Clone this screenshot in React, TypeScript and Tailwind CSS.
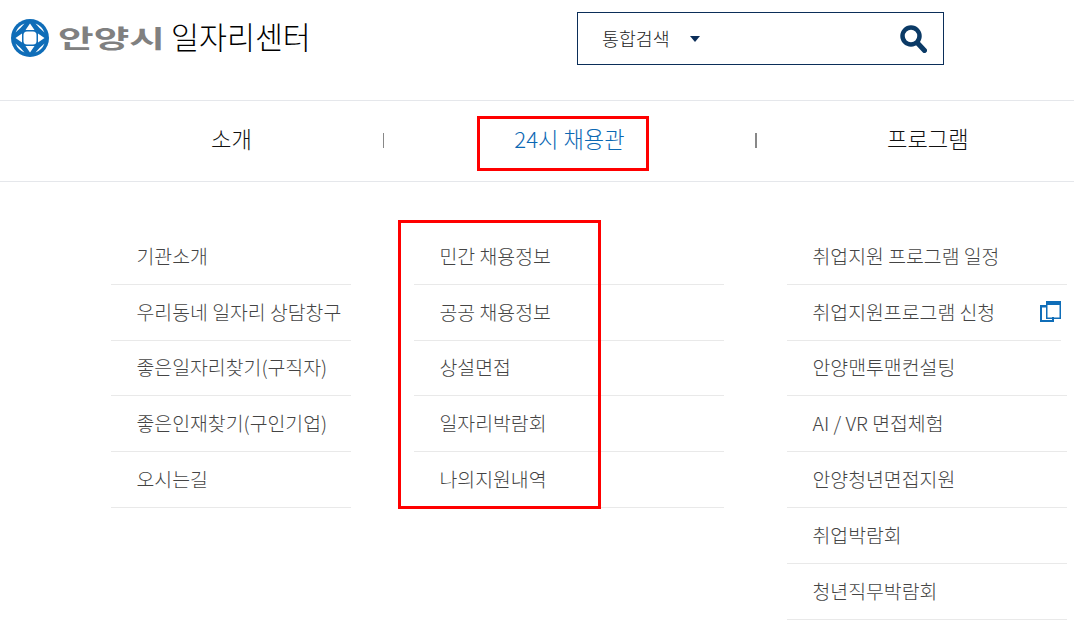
const font = "font-['Noto_Sans_CJK_KR','Noto_Sans',sans-serif]";

const introItems = ['기관소개', '우리동네 일자리 상담창구', '좋은일자리찾기(구직자)', '좋은인재찾기(구인기업)', '오시는길'];
const jobItems = ['민간 채용정보', '공공 채용정보', '상설면접', '일자리박람회', '나의지원내역'];
const programItems = [
  '취업지원 프로그램 일정',
  '취업지원프로그램 신청',
  '안양맨투맨컨설팅',
  'AI / VR 면접체험',
  '안양청년면접지원',
  '취업박람회',
  '청년직무박람회',
];

function Globe() {
  return (
    <svg width="38" height="38" viewBox="0 0 38 38" className="shrink-0">
      <circle cx="19" cy="19" r="19" fill="#0f6db8" />
      {/* center */}
      <rect x="12.500" y="12.500" width="13" height="13" rx="3.500" fill="#fff" />
      {/* pole triangles */}
      <path d="M19 4.500l4.500 6.500h-9z M19 33.500l4.500-6.500h-9z M4.500 19l6.500-4.500v9z M33.500 19l-6.500-4.500v9z" fill="#fff" />
      {/* corner slivers */}
      <path
        d="M4.500 13.500A15.500 15.500 0 0 1 13.500 4.500Q9.500 9.500 4.500 13.500z M24.500 4.500A15.500 15.500 0 0 1 33.500 13.500Q28.500 9.500 24.500 4.500z M4.500 24.500A15.500 15.500 0 0 0 13.500 33.500Q9.500 28.500 4.500 24.500z M33.500 24.500A15.500 15.500 0 0 1 24.500 33.500Q28.500 28.500 33.500 24.500z"
        fill="#fff"
      />
    </svg>
  );
}

function SearchIcon() {
  return (
    <svg width="27" height="28" viewBox="0 0 27 28" className="ml-auto shrink-0">
      <circle cx="11" cy="11" r="8.500" fill="none" stroke="#0b3a66" strokeWidth="4.500" />
      <path d="M17.500 18l7 7.500" fill="none" stroke="#0b3a66" strokeWidth="5" strokeLinecap="round" />
    </svg>
  );
}

function WindowIcon() {
  return (
    <svg width="21" height="21" viewBox="0 0 21 21" className="shrink-0">
      <path d="M0 4h6v2.500H2V19h10v-3h2v5H0z" fill="#0f6db8" />
      <path d="M6 0h15v18H6zM7.500 4v12.500h12V4z" fill="#0f6db8" fillRule="evenodd" />
    </svg>
  );
}

function MenuList({ items, icon }: { items: string[]; icon?: number }) {
  return (
    <ul>
      {items.map((item, i) => (
        <li
          key={item}
          className={`flex h-[55.8px] items-center justify-between border-b border-[#e9e9e9] pb-[2px] pl-[25.500px] text-[19.400px] font-light text-[#444] ${
            icon === i ? 'mr-[6px]' : ''
          }`}
        >
          <span>{item}</span>
          {icon === i && <WindowIcon />}
        </li>
      ))}
    </ul>
  );
}

export default function App() {
  return (
    <div className={`relative h-[621px] w-[1074px] overflow-hidden bg-white ${font}`}>
      {/* Top header */}
      <header className="flex h-[101px] border-b border-[#e5e7eb] pl-[11px]">
        <div className="flex h-[75px] w-[566px] items-center">
          <Globe />
          <span className="ml-[9px] w-[104px] origin-left scale-x-[1.55] text-[25px] font-bold whitespace-nowrap text-[#808080]">
            안양시
          </span>
          <span className="mb-[2px] ml-[9px] text-[30.400px] font-light text-black">일자리센터</span>
        </div>
        <div className="mt-[12px] flex h-[53px] w-[367px] items-center border border-[#0b2e59] pl-[24px] pr-[16px]">
          <span className="text-[18.400px] font-light text-[#222]">통합검색</span>
          <span className="ml-[20px] h-0 w-0 border-x-[5px] border-t-[6px] border-x-transparent border-t-[#0b2e59]" />
          <SearchIcon />
        </div>
      </header>

      {/* Main nav */}
      <nav className="flex h-[81px] items-center border-b border-[#e5e7eb] pb-[2px] pl-[80px] text-[22.200px] font-light text-[#111]">
        <div className="mb-[3px] flex w-[303px] items-center justify-center">소개</div>
        <div className="h-[15px] w-[1px] bg-[#888]" />
        <div className="mb-[3px] flex w-[371px] items-center justify-center text-[#0b68b4]">24시 채용관</div>
        <div className="h-[15px] w-[2px] bg-[#888]" />
        <div className="mb-[3px] pl-[130px]">프로그램</div>
      </nav>

      {/* Submenus */}
      <div className="flex pl-[111px] pt-[47px]">
        <div className="w-[240px]">
          <MenuList items={introItems} />
        </div>
        <div className="ml-[63px] w-[310px]">
          <MenuList items={jobItems} />
        </div>
        <div className="ml-[63px] w-[280px]">
          <MenuList items={programItems} icon={1} />
        </div>
      </div>

      {/* Red highlight boxes */}
      <div className="absolute left-[477px] top-[116px] h-[55px] w-[172px] border-[3px] border-[#ff0000]" />
      <div className="absolute left-[398px] top-[220px] h-[289px] w-[203px] border-[3px] border-[#ff0000]" />
    </div>
  );
}
